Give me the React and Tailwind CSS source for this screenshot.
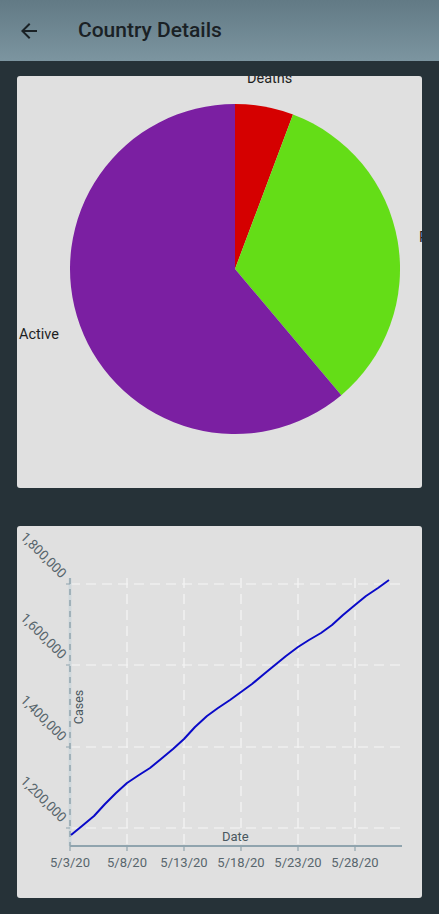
const pts = [
  [71, 835], [82, 826], [94, 816], [105, 804], [116, 793], [127, 783], [139, 775], [150, 768],
  [161, 759], [173, 749], [184, 739], [195, 727], [207, 716], [218, 708], [230, 700], [241, 692],
  [252, 684], [264, 674], [275, 665], [286, 656], [298, 647], [309, 640], [321, 633], [332, 625],
  [343, 615], [355, 605], [366, 596], [378, 588], [389, 580],
]

const yTicks = [
  { y: 58, label: '1,800,000' },
  { y: 139, label: '1,600,000' },
  { y: 221, label: '1,400,000' },
  { y: 302, label: '1,200,000' },
]

const xTicks = [
  { x: 53, label: '5/3/20' },
  { x: 110, label: '5/8/20' },
  { x: 167, label: '5/13/20' },
  { x: 224, label: '5/18/20' },
  { x: 281, label: '5/23/20' },
  { x: 338, label: '5/28/20' },
]

function PieCard() {
  return (
    <div className="h-[412px] rounded-[3px] bg-[#e0e0e0] overflow-hidden">
      <svg width="406" height="412" className="block" style={{ fontFamily: 'Roboto, sans-serif' }}>
        <path d="M218 193 L218 28 A165 165 0 0 1 276 38.5 Z" fill="#d50000" />
        <path d="M218 193 L276 38.5 A165 165 0 0 1 324.3 319.2 Z" fill="#64dd17" />
        <path d="M218 193 L324.3 319.2 A165 165 0 1 1 218 28 Z" fill="#7b1fa2" />
        <text x="230" y="7" fontSize="14.5" fill="#1f1f1f">Deaths</text>
        <text x="2" y="263" fontSize="14.5" fill="#1f1f1f">Active</text>
        <text x="402" y="166" fontSize="14.5" fill="#1f1f1f">Recovered</text>
      </svg>
    </div>
  )
}

function LineCard() {
  return (
    <div className="h-[372px] rounded-[3px] bg-[#e0e0e0] overflow-hidden">
      <svg width="406" height="372" className="block" style={{ fontFamily: 'Roboto, sans-serif' }}>
        {yTicks.map((t) => (
          <line key={t.y} x1="53" y1={t.y} x2="385" y2={t.y} stroke="#f5f5f5" strokeWidth="1.2" strokeDasharray="10 6" />
        ))}
        {xTicks.slice(1).map((t) => (
          <line key={t.x} x1={t.x} y1="52" x2={t.x} y2="320" stroke="#f5f5f5" strokeWidth="1.2" strokeDasharray="10 6" />
        ))}
        <line x1="53" y1="52" x2="53" y2="320" stroke="#cfd8dc" strokeWidth="3" />
        <line x1="53" y1="52" x2="53" y2="320" stroke="#90a4ae" strokeWidth="1.5" strokeDasharray="6 5" />
        {yTicks.map((t) => (
          <g key={t.label}>
            <line x1="49" y1={t.y} x2="53" y2={t.y} stroke="#90a4ae" strokeWidth="1.2" />
            <text x="44" y={t.y - 5} fontSize="13.5" fill="#58666d" textAnchor="end" transform={`rotate(45 44 ${t.y - 5})`}>{t.label}</text>
          </g>
        ))}
        <line x1="53" y1="320" x2="385" y2="320" stroke="#90a4ae" strokeWidth="2" />
        {xTicks.map((t) => (
          <g key={t.label}>
            <line x1={t.x} y1="320" x2={t.x} y2="325" stroke="#90a4ae" strokeWidth="1.2" />
            <text x={t.x} y="341" fontSize="13" fill="#58666d" textAnchor="middle">{t.label}</text>
          </g>
        ))}
        <text x="205" y="315" fontSize="13" fill="#4a585f">Date</text>
        <text x="0" y="0" fontSize="12.5" fill="#4a585f" textAnchor="middle" transform="translate(66 181) rotate(-90)">Cases</text>
        <polyline points={pts.map(([x, y]) => `${x - 17},${y - 526}`).join(' ')} fill="none" stroke="#0a0ac8" strokeWidth="2" strokeLinejoin="round" />
      </svg>
    </div>
  )
}

export default function App() {
  return (
    <div className="min-h-[914px] bg-[#263238]" style={{ fontFamily: 'Roboto, sans-serif' }}>
      <header className="h-[61px] flex items-center bg-gradient-to-b from-[#627a85] to-[#7c95a0]">
        <button className="ml-[17px] w-6 h-6 flex items-center justify-center">
          <svg viewBox="0 0 24 24" width="24" height="24" fill="#1a2125">
            <path d="M20 11H7.83l5.59-5.59L12 4l-8 8 8 8 1.41-1.41L7.83 13H20v-2z" />
          </svg>
        </button>
        <h1 className="ml-[37px] text-[21px] font-medium text-[#1a2125]">Country Details</h1>
      </header>
      <div className="px-[17px] pt-[15px] pb-4 flex flex-col gap-[38px]">
        <PieCard />
        <LineCard />
      </div>
    </div>
  )
}
